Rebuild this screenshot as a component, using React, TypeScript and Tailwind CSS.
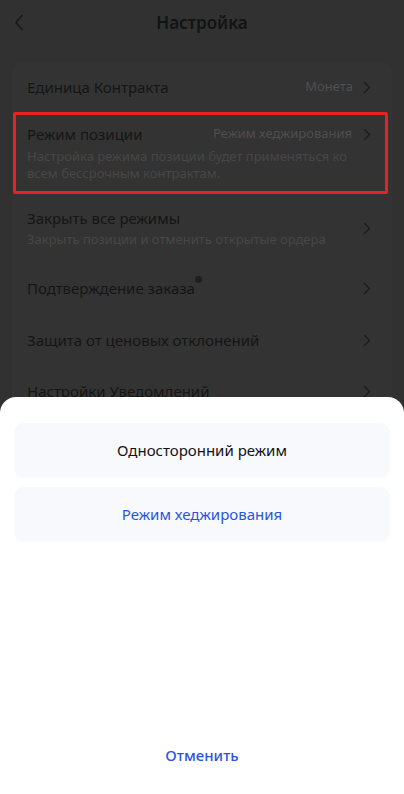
import React from 'react';

const font = { fontFamily: '"Noto Sans", Roboto, sans-serif' };

function Chevron({ className = '' }: { className?: string }) {
    return (
        <svg width="8" height="13" viewBox="0 0 8 13" className={className} fill="none">
            <path d="M1.5 1.5l5 5-5 5" stroke="#1c1c1c" strokeWidth="1.4" strokeLinecap="round" strokeLinejoin="round" />
        </svg>
    );
}

interface RowProps {
    title: string;
    value?: string;
    dot?: boolean;
    h: string;
}

function Row({ title, value, dot, h }: RowProps) {
    return (
        <div className={`${h} flex items-center pl-[15px] pr-[21px]`}>
            <span className="relative text-[15px] text-[#151515] leading-[20px]">
                {title}
                {dot && <span className="absolute -right-[7px] -top-[2px] w-[7px] h-[7px] rounded-full bg-[#1e1e1e]" />}
            </span>
            <span className="ml-auto mr-[10px] text-[13px] text-[#4f4f4f]">{value}</span>
            <Chevron className="shrink-0" />
        </div>
    );
}

export default function App() {
    return (
        <div className="relative min-h-[794px] w-[404px] bg-[#313131] overflow-hidden" style={font}>
            {/* Header */}
            <div className="h-[46px] flex items-center justify-center relative">
                <svg width="10" height="17" viewBox="0 0 10 17" className="absolute left-[14px] top-[14px]" fill="none">
                    <path d="M8 1.5L2 8.5l6 7" stroke="#1a1a1a" strokeWidth="1.8" strokeLinecap="round" strokeLinejoin="round" />
                </svg>
                <span className="text-[17px] font-semibold text-[#131313]">Настройка</span>
            </div>

            {/* Settings card */}
            <div className="mx-[12px] mt-[16px] bg-[#333333] rounded-[10px] pb-4">
                <Row title="Единица Контракта" value="Монета" h="h-[50px]" />
                <div className="ml-[1px] mr-[4px] h-[82px] border-[3px] border-[#e62222] rounded-[2px] pl-[11px] pr-[14px] flex flex-col justify-center">
                    <div className="flex items-center">
                        <span className="text-[15px] text-[#151515] leading-[20px]">Режим позиции</span>
                        <span className="ml-auto mr-[11px] text-[13px] text-[#4f4f4f]">Режим хеджирования</span>
                        <Chevron />
                    </div>
                    <p className="mt-[4px] text-[13px] leading-[17px] text-[#474747] pr-[20px]">
                        Настройка режима позиции будет применяться ко всем бессрочным контрактам.
                    </p>
                </div>
                <div className="h-[68px] flex items-center pl-[15px] pr-[21px]">
                    <div className="flex-1">
                        <div className="text-[15px] text-[#151515] leading-[20px]">Закрыть все режимы</div>
                        <div className="mt-[3px] text-[13px] leading-[17px] text-[#474747]">Закрыть позиции и отменить открытые ордера</div>
                    </div>
                    <Chevron />
                </div>
                <Row title="Подтверждение заказа" dot h="h-[52px]" />
                <Row title="Защита от ценовых отклонений" h="h-[52px]" />
                <Row title="Настройки Уведомлений" h="h-[50px]" />
            </div>

            {/* Bottom sheet */}
            <div className="absolute left-0 right-0 top-[397px] bottom-0 bg-white rounded-t-[16px] flex flex-col">
                <div className="px-[14px] pt-[26px] flex flex-col gap-[9px]">
                    <button className="h-[55px] w-full rounded-[10px] bg-[#f8f9fd] text-[15px] text-[#121212]">
                        Односторонний режим
                    </button>
                    <button className="h-[55px] w-full rounded-[10px] bg-[#f8f9fd] text-[15px] text-[#2a55e0]">
                        Режим хеджирования
                    </button>
                </div>
                <div className="mt-auto h-[76px] pb-[2px] flex items-center justify-center">
                    <span className="text-[15px] font-medium text-[#2a55e0]">Отменить</span>
                </div>
            </div>
        </div>
    );
}
